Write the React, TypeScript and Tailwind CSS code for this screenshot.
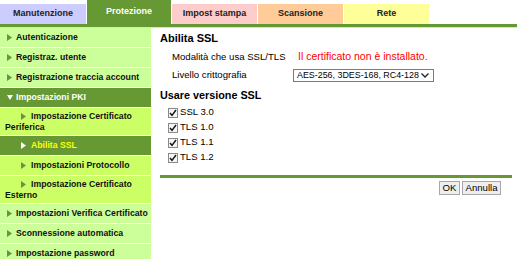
import React from "react";

type Item = {
  label: string;
  level: 0 | 1;
  open?: boolean;
  active?: boolean;
  tall?: boolean;
};

const tabs = [
  { label: "Manutenzione", w: "w-[86px]", bg: "bg-[#ccccff]" },
  { label: "Protezione", w: "w-[84px]", bg: "bg-[#669933]", current: true },
  { label: "Impost stampa", w: "w-[85px]", bg: "bg-[#ffcccc]" },
  { label: "Scansione", w: "w-[85px]", bg: "bg-[#ffcc99]" },
  { label: "Rete", w: "w-[85px]", bg: "bg-[#ffff99]" },
];

const menu: Item[] = [
  { label: "Autenticazione", level: 0 },
  { label: "Registraz. utente", level: 0 },
  { label: "Registrazione traccia account", level: 0 },
  { label: "Impostazioni PKI", level: 0, open: true },
  { label: "Impostazione Certificato Periferica", level: 1, tall: true },
  { label: "Abilita SSL", level: 1, active: true },
  { label: "Impostazioni Protocollo", level: 1 },
  { label: "Impostazione Certificato Esterno", level: 1, tall: true },
  { label: "Impostazioni Verifica Certificato", level: 0 },
  { label: "Sconnessione automatica", level: 0 },
  { label: "Impostazione password", level: 0 },
];

const Arrow = ({ down, color }: { down?: boolean; color: string }) =>
  down ? (
    <svg width="6" height="5" viewBox="0 0 6 5" className="inline-block align-middle">
      <path d="M0 0 L6 0 L3 5 Z" fill={color} />
    </svg>
  ) : (
    <svg width="5" height="7" viewBox="0 0 5 7" className="inline-block align-middle">
      <path d="M0 0 L5 3.5 L0 7 Z" fill={color} />
    </svg>
  );

const MenuRow = ({ item }: { item: Item }) => {
  const dark = item.active || item.open;
  const bg = dark
    ? "bg-[#669933]"
    : item.level === 1
      ? "bg-[#ccff66]"
      : "bg-[#ccff99]";
  const text = item.active ? "text-[#ffff00]" : dark ? "text-white" : "text-[#111]";
  const arrow = dark ? "#ffffff" : "#6f8f4a";

  if (item.level === 1) {
    return (
      <div
        className={`${bg} ${text} ${item.tall ? "h-[27px]" : "h-[19px]"} flex items-center pl-[5px] pr-[2px]`}
      >
        <div className="indent-[16px] leading-[10.5px]">
          <Arrow color={arrow} />
          <span className="ml-[5px]">{item.label}</span>
        </div>
      </div>
    );
  }

  return (
    <div className={`${bg} ${text} h-[19px] flex items-center pl-[7px]`}>
      <span className="w-[9px] flex items-center">
        <Arrow down={item.open} color={arrow} />
      </span>
      <span>{item.label}</span>
    </div>
  );
};

const Check = ({ label }: { label: string }) => (
  <div className="h-[15px] flex items-center pl-[8px]">
    <span className="w-[10px] h-[10px] border border-[#8a8a8a] bg-[#f4f4f4] flex items-center justify-center">
      <svg width="8" height="8" viewBox="0 0 8 8">
        <path d="M1 4 L3 6.3 L7 1" stroke="#111" strokeWidth="1.4" fill="none" />
      </svg>
    </span>
    <span className="ml-[2px]">{label}</span>
  </div>
);

export default function App() {
  return (
    <div className="w-[517px] h-[259px] overflow-hidden bg-white font-['Liberation_Sans',Arial,sans-serif] text-black">
      {/* tabs */}
      <div className="flex items-end gap-[1px] h-[24px]">
        {tabs.map((t) => (
          <div
            key={t.label}
            className={`${t.w} ${t.bg} ${t.current ? "h-[24px] text-white" : "h-[20px] text-[#222]"} flex items-center justify-center text-[9px] font-bold`}
          >
            {t.label}
          </div>
        ))}
      </div>
      <div className="h-[3px] bg-[#669933]" />
      <div className="h-[1px] bg-[#d5e4c2]" />

      <div className="flex">
        {/* side menu */}
        <div className="w-[151px] flex flex-col gap-[1px] text-[8.7px] font-bold">
          {menu.map((m) => (
            <MenuRow key={m.label} item={m} />
          ))}
        </div>

        {/* main */}
        <div className="ml-[9px] w-[352px] text-[9.6px]">
          <h1 className="mt-[2px] text-[11px] leading-[16px] font-bold">Abilita SSL</h1>
          <div className="mt-[2px] h-[18px] flex items-center pl-[12px]">
            <span className="w-[121px]">Modalità che usa SSL/TLS</span>
            <span className="ml-[5px] text-[10.5px] text-[#ff0000]">Il certificato non è installato.</span>
          </div>
          <div className="h-[18px] flex items-center pl-[12px]">
            <span className="w-[121px]">Livello crittografia</span>
            <div className="w-[141px] h-[13px] border border-[#7a7a7a] flex items-center justify-between pl-[3px] pr-[4px] leading-none whitespace-nowrap overflow-hidden">
              <span className="text-[8.9px]">AES-256, 3DES-168, RC4-128</span>
              <svg width="8" height="5" viewBox="0 0 8 5" className="shrink-0">
                <path d="M0.5 0.5 L4 4 L7.5 0.5" stroke="#222" strokeWidth="1.3" fill="none" />
              </svg>
            </div>
          </div>
          <h2 className="mt-[3px] text-[10.8px] leading-[16px] font-bold">Usare versione SSL</h2>
          <div className="mt-[2px]">
            <Check label="SSL 3.0" />
            <Check label="TLS 1.0" />
            <Check label="TLS 1.1" />
            <Check label="TLS 1.2" />
          </div>
          <div className="mt-[10px] h-[3px] bg-[#669933]" />
          <div className="mt-[3px] flex justify-end gap-[2px] pr-[11px]">
            <button className="w-[21px] h-[14px] border border-[#a8a8a8] bg-[#eeeeee] leading-none">OK</button>
            <button className="w-[39px] h-[14px] border border-[#a8a8a8] bg-[#eeeeee] leading-none">Annulla</button>
          </div>
        </div>
      </div>
    </div>
  );
}
